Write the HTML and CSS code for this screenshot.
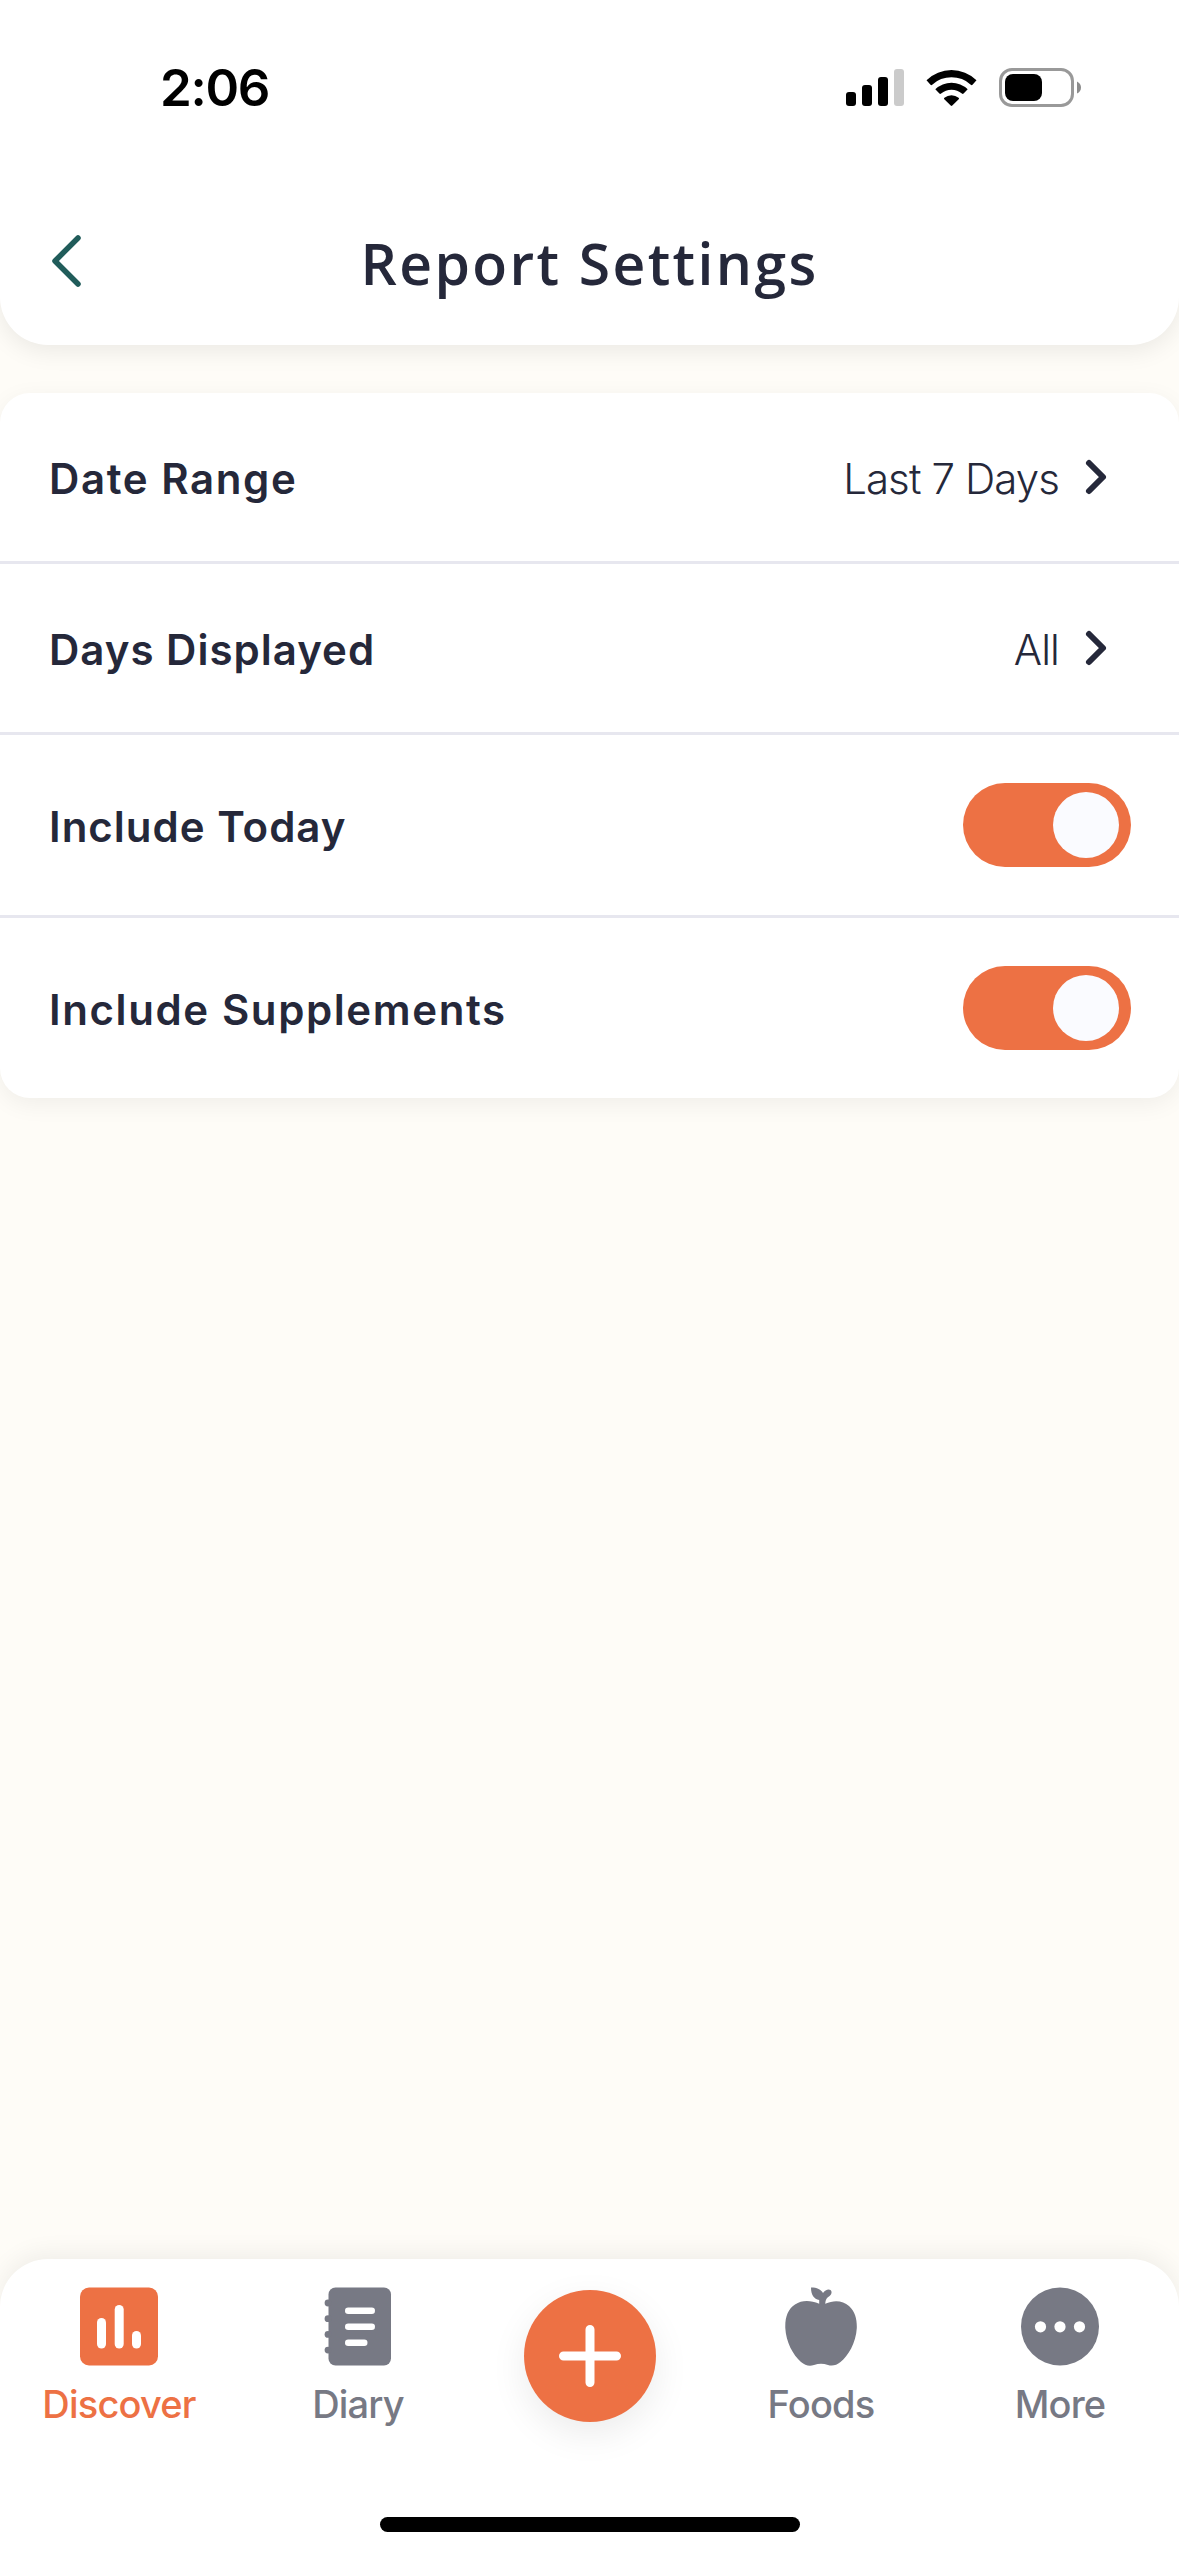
FILE: index.html
```html
<!DOCTYPE html>
<html lang="en">
<head>
    <meta charset="UTF-8">
    <meta name="viewport" content="width=device-width, initial-scale=1.0">
    <title>Report Settings</title>
    <link rel="stylesheet" href="styles.css">
</head>
<body>
    <header class="header">
        <div class="status-bar">
            <span class="time">2:06</span>
            <svg class="status-icons" width="236" height="40" viewBox="0 0 236 40">
                <!-- signal -->
                <rect x="0" y="24" width="10" height="14" rx="3"/>
                <rect x="16" y="17" width="10" height="21" rx="3"/>
                <rect x="32" y="9" width="10" height="29" rx="3"/>
                <rect x="48" y="1" width="10" height="37" rx="3" fill="#cbcbcb"/>
                <!-- wifi -->
                <path d="M80.5 12.2 A36 36 0 0 1 130.5 12.2 L126.5 16.7 A1.2 1.2 0 0 1 124.8 16.7 A28.5 28.5 0 0 0 86.2 16.7 A1.2 1.2 0 0 1 84.5 16.7 Z"/>
                <path d="M89.3 21.2 A23.5 23.5 0 0 1 121.7 21.2 L117.6 25.6 A1.2 1.2 0 0 1 115.9 25.6 A15.6 15.6 0 0 0 95.1 25.6 A1.2 1.2 0 0 1 93.4 25.6 Z"/>
                <path d="M98.4 29.8 A11.2 11.2 0 0 1 112.6 29.8 Q113.5 30.5 112.7 31.3 L106.3 37.6 Q105.5 38.4 104.7 37.6 L98.3 31.3 Q97.5 30.5 98.4 29.8 Z"/>
                <!-- battery -->
                <rect x="154.5" y="1.5" width="72" height="36" rx="11.5" fill="none" stroke="#999" stroke-width="3"/>
                <rect x="159" y="6" width="37" height="27" rx="8"/>
                <path d="M231 13.5 Q235 15.5 235 19.5 Q235 23.5 231 25.5 Z" fill="#8c8c8c"/>
            </svg>
        </div>
        <div class="title-bar">
            <svg class="back" width="32" height="54" viewBox="0 0 32 54">
                <path d="M28 4 L5 27 L28 50"/>
            </svg>
            <h1 class="title">Report Settings</h1>
        </div>
    </header>

    <main class="content">
        <section class="card">
            <div class="row">
                <span class="label date-range">Date Range</span>
                <span class="value">Last 7 Days</span>
                <svg class="chevron" width="24" height="38" viewBox="0 0 24 38">
                    <path d="M5 5 L19 19 L5 33"/>
                </svg>
            </div>
            <div class="row">
                <span class="label">Days Displayed</span>
                <span class="value">All</span>
                <svg class="chevron" width="24" height="38" viewBox="0 0 24 38">
                    <path d="M5 5 L19 19 L5 33"/>
                </svg>
            </div>
            <div class="row row-toggle">
                <span class="label">Include Today</span>
                <span class="toggle"><span class="knob"></span></span>
            </div>
            <div class="row row-toggle">
                <span class="label supplements">Include Supplements</span>
                <span class="toggle"><span class="knob"></span></span>
            </div>
        </section>
    </main>

    <nav class="tab-bar">
        <div class="tabs">
            <a class="tab active">
                <svg width="78" height="78" viewBox="0 0 78 78">
                    <rect width="78" height="78" rx="9"/>
                    <g fill="#fff">
                        <rect x="17" y="30.5" width="9" height="30.5" rx="4.5"/>
                        <rect x="34.7" y="17.5" width="9" height="43.5" rx="4.5"/>
                        <rect x="52" y="43.5" width="9" height="17.5" rx="4.5"/>
                    </g>
                </svg>
                <span class="tab-label">Discover</span>
            </a>
            <a class="tab">
                <svg width="68" height="78" viewBox="0 0 68 78">
                    <rect x="4.5" width="62.5" height="78" rx="7"/>
                    <circle cx="4" cy="15.5" r="3.4"/>
                    <circle cx="4" cy="31.2" r="3.4"/>
                    <circle cx="4" cy="46.9" r="3.4"/>
                    <circle cx="4" cy="62.6" r="3.4"/>
                    <g fill="#fff">
                        <rect x="21" y="20" width="30" height="6.5" rx="3.2"/>
                        <rect x="21" y="36" width="30" height="6.5" rx="3.2"/>
                        <rect x="21" y="52" width="22.5" height="6.5" rx="3.2"/>
                    </g>
                </svg>
                <span class="tab-label">Diary</span>
            </a>
            <a class="add">
                <svg width="62" height="62" viewBox="0 0 62 62">
                    <path d="M31 4.5 V57.5 M4.5 31 H57.5"/>
                </svg>
            </a>
            <a class="tab">
                <svg width="72" height="79" viewBox="0 0 72 79">
                    <!-- stem and leaf -->
                    <path d="M26 0.5 C32 0.5 36 2.5 38 6 C40 3 43.5 1.5 45.5 3 C47.5 4.8 46.5 8 44 9.5 C41.5 11 40.3 13 40.3 18 L34.2 18 L34.2 13 C29 12 26 8 26 0.5 Z"/>
                    <path d="M34.2 16.8 L40.3 16.8 C49 12.5 58 13.5 64 19 C70.5 25 72 33 71.8 41 C71 56 63 69 55.5 75 C51.5 78.5 47 79.3 43 78 C38 76.3 34 76.3 29 78 C24.5 79.5 20 78.5 16 75 C8 68 1 55 0.3 41 C0 30 3 22 10 17.5 C17 13 25 13 34.2 16.8 Z"/>
                </svg>
                <span class="tab-label">Foods</span>
            </a>
            <a class="tab">
                <svg width="78" height="78" viewBox="0 0 78 78">
                    <circle cx="39" cy="39" r="39"/>
                    <g fill="#fff">
                        <circle cx="19.5" cy="39.3" r="5.6"/>
                        <circle cx="39" cy="39.3" r="5.6"/>
                        <circle cx="58.5" cy="39.3" r="5.6"/>
                    </g>
                </svg>
                <span class="tab-label">More</span>
            </a>
        </div>
        <div class="home-indicator"></div>
    </nav>
</body>
</html>
```
FILE: styles.css
```css
* {
    box-sizing: border-box;
}

body {
    margin: 0;
    height: 2556px;
    display: flex;
    flex-direction: column;
    overflow: hidden;
    font-family: Inter, sans-serif;
    background-color: #fefcf7;
    color: #25283a;
}

svg {
    display: block;
    flex-shrink: 0;
}

/* === HEADER === */
.header {
    height: 345px;
    background-color: #fff;
    border-radius: 0 0 48px 48px;
    box-shadow: 0 6px 24px rgba(0, 0, 0, 0.08);
}

.status-bar {
    height: 129px;
    padding: 46px 97px 0 160px;
    display: flex;
    align-items: center;
    justify-content: space-between;
    color: #000;
}

.time {
    font-size: 51px;
    font-weight: 600;
    letter-spacing: -1.3px;
}

.title-bar {
    height: 216px;
    padding: 47px 50px 0;
    display: grid;
    grid-template-columns: 32px 1fr 32px;
    align-items: center;
}

.back {
    fill: none;
    stroke: #205c5a;
    stroke-width: 5.5;
    stroke-linecap: round;
    stroke-linejoin: round;
}

.title {
    margin: 0;
    padding-top: 4px;
    font-family: "Open Sans", sans-serif;
    font-size: 57px;
    font-weight: 600;
    letter-spacing: 2.4px;
    text-align: center;
}

/* === SETTINGS === */
.content {
    flex: 1;
    padding-top: 48px;
}

.card {
    background-color: #fff;
    border-radius: 30px;
    box-shadow: 0 6px 24px rgba(0, 0, 0, 0.06);
}

.row {
    height: 171px;
    padding: 0 48px;
    display: flex;
    align-items: center;
    border-bottom: 3px solid #e7e7ef;
}

.row-toggle {
    height: 183px;
}

.row:last-child {
    height: 180px;
    border-bottom: none;
}

.label,
.value {
    padding-top: 2px;
    font-size: 42px;
    white-space: nowrap;
}

.label {
    flex: 1;
    padding-left: 1px;
    font-weight: 600;
    letter-spacing: 1px;
}

.date-range,
.supplements {
    letter-spacing: 1.6px;
}

.value {
    margin-right: 25px;
    font-weight: 300;
    letter-spacing: -0.9px;
}

.chevron {
    margin-right: 23px;
    fill: none;
    stroke: #25283a;
    stroke-width: 6;
    stroke-linecap: round;
    stroke-linejoin: round;
}

.toggle {
    width: 168px;
    height: 84px;
    padding-right: 12px;
    display: flex;
    align-items: center;
    justify-content: flex-end;
    border-radius: 42px;
    background-color: #ed7144;
}

.knob {
    width: 66px;
    height: 66px;
    border-radius: 50%;
    background-color: #fafbff;
}

/* === TAB BAR === */
.tab-bar {
    height: 297px;
    display: flex;
    flex-direction: column;
    align-items: center;
    background-color: #fff;
    border-radius: 48px 48px 0 0;
    box-shadow: 0 -6px 24px rgba(0, 0, 0, 0.06);
}

.tabs {
    height: 258px;
    padding-top: 28px;
    display: grid;
    grid-template-columns: 238px 240px 223px 240px 238px;
    justify-items: center;
    align-items: start;
}

.tab {
    display: flex;
    flex-direction: column;
    align-items: center;
    color: #777984;
    fill: currentColor;
}

.tab.active {
    color: #ed7144;
}

.tab svg {
    height: 79px;
}

.tab-label {
    margin-top: 15px;
    font-size: 38px;
    font-weight: 500;
    line-height: 46px;
    letter-spacing: -0.8px;
}

.add {
    width: 132px;
    height: 132px;
    margin-top: 3px;
    display: flex;
    align-items: center;
    justify-content: center;
    border-radius: 50%;
    background-color: #ed7144;
    box-shadow: 0 12px 36px rgba(0, 0, 0, 0.08);
}

.add path {
    stroke: #fff;
    stroke-width: 9;
    stroke-linecap: round;
}

.home-indicator {
    width: 420px;
    height: 15px;
    border-radius: 8px;
    background-color: #000;
}
```
